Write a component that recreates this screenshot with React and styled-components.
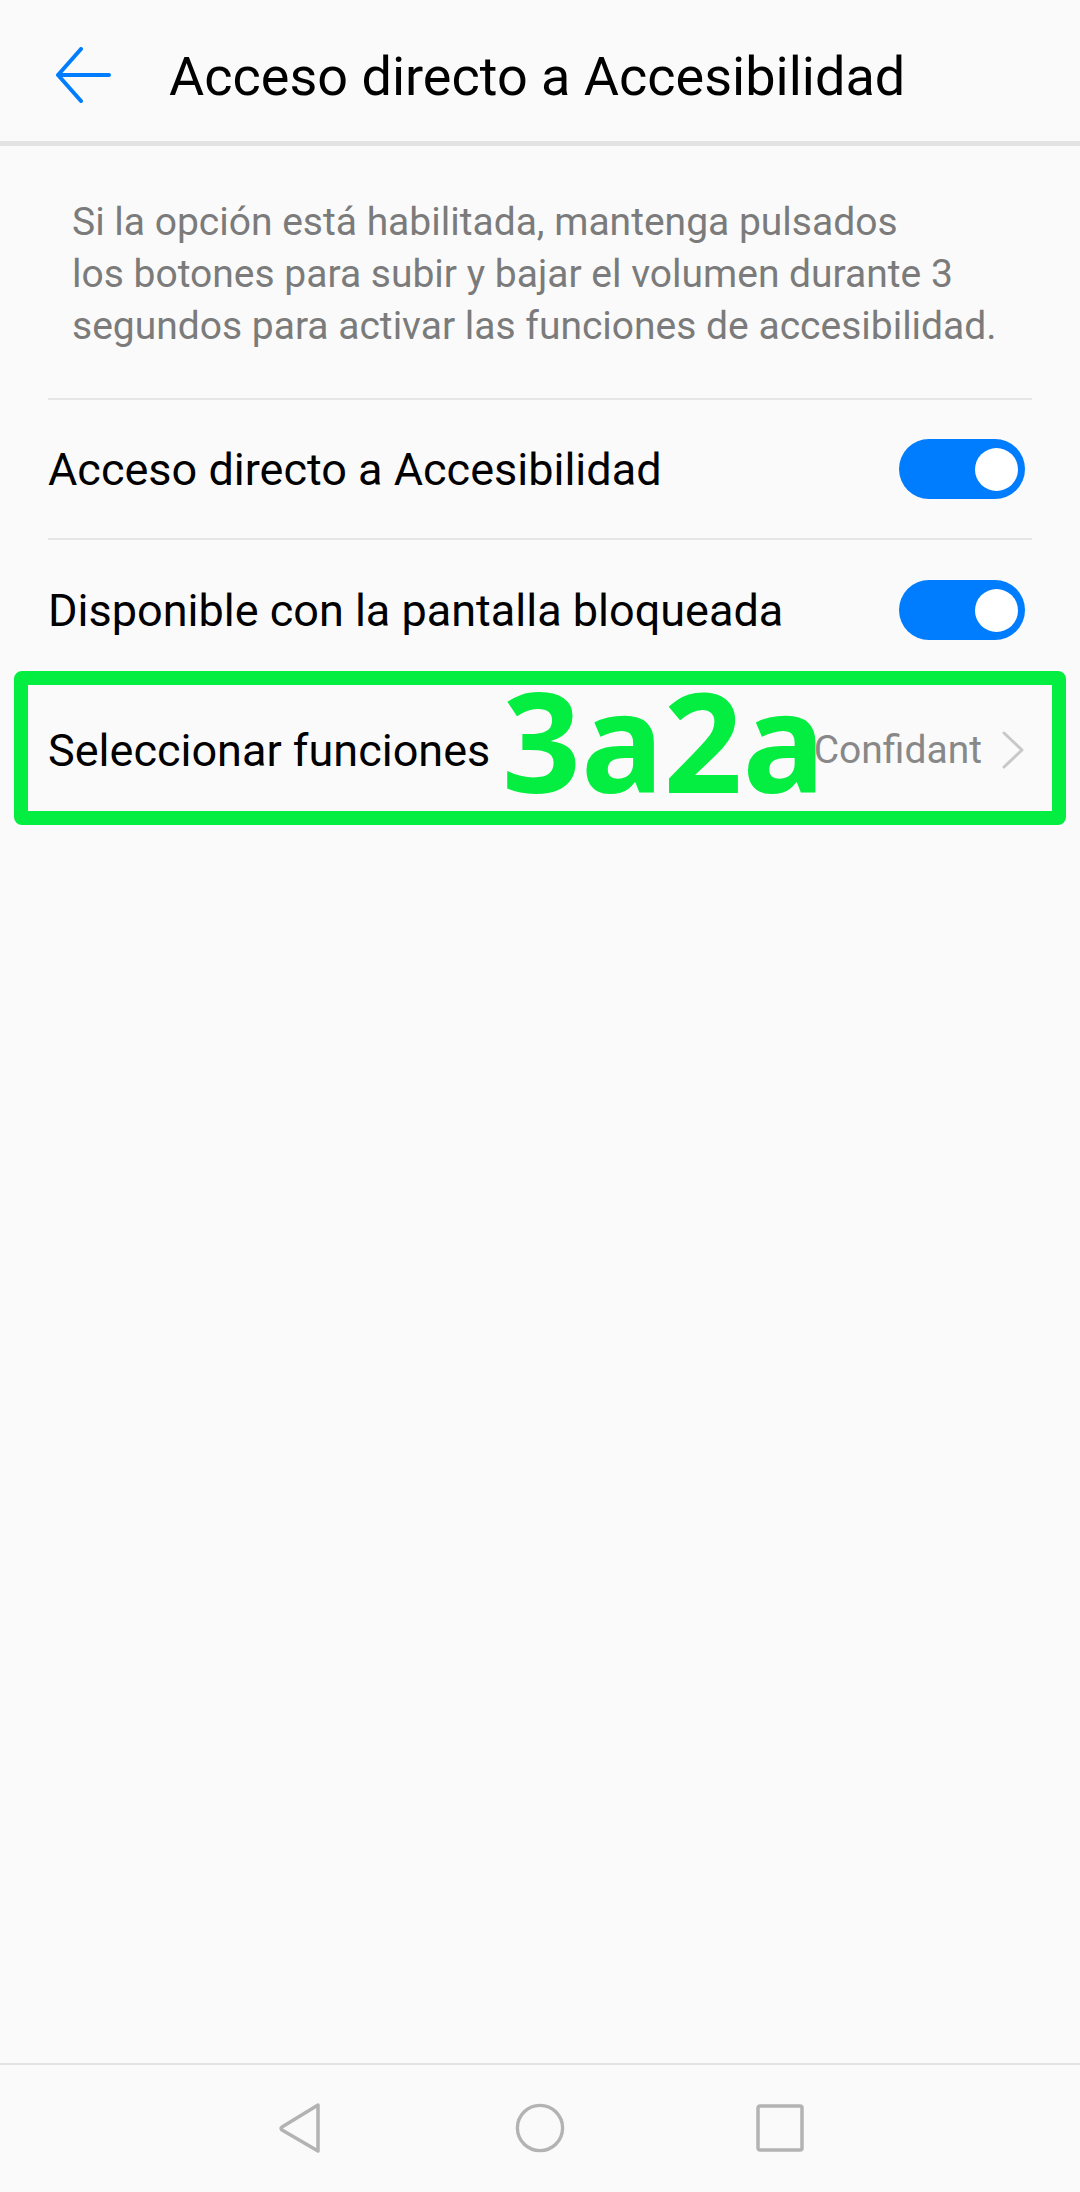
import React from 'react';
import styled, { createGlobalStyle } from 'styled-components';

const GlobalStyle = createGlobalStyle`
  html, body {
    margin: 0;
    padding: 0;
    background: #fafafa;
  }
  * {
    box-sizing: border-box;
  }
`;

const Screen = styled.div`
  min-height: 2192px;
  display: flex;
  flex-direction: column;
  background: #fafafa;
  font-family: Roboto, "Liberation Sans", sans-serif;
`;

const Header = styled.header`
  height: 141px;
  display: flex;
  align-items: center;
  padding-left: 55px;
  border-bottom: 5px solid #e3e3e3;
  box-sizing: content-box;
`;

const BackButton = styled.div`
  width: 56px;
  height: 56px;
  display: flex;
  align-items: center;
  justify-content: center;
  margin-top: 8px;
`;

const Title = styled.h1`
  margin: 12px 0 0 58px;
  font-size: 54px;
  font-weight: 400;
  color: #000;
`;

const Content = styled.main`
  padding: 0 48px;
`;

const Description = styled.p`
  margin: 0;
  padding: 50px 0 46px 24px;
  font-size: 39px;
  line-height: 52px;
  color: #7b7b7b;
  border-bottom: 2px solid #e6e6e6;
`;

const Row = styled.div`
  position: relative;
  height: 140px;
  display: flex;
  align-items: center;
  border-bottom: ${p => (p.last ? 'none' : '2px solid #e6e6e6')};
  padding-right: 7px;
`;

const Label = styled.span`
  flex: 1;
  font-size: 45px;
  color: #000;
`;

const Track = styled.div`
  width: 126px;
  height: 60px;
  border-radius: 30px;
  background: #007dff;
  display: flex;
  align-items: center;
  justify-content: flex-end;
  padding-right: 7px;
`;

const Knob = styled.div`
  width: 43px;
  height: 43px;
  border-radius: 50%;
  background: #fff;
`;

const Value = styled.span`
  font-size: 39px;
  color: #888;
  margin-right: 19px;
`;

const Highlight = styled.div`
  position: absolute;
  top: -9px;
  bottom: -5px;
  left: -34px;
  right: -34px;
  border: 14px solid #03ee40;
  border-radius: 8px;
  pointer-events: none;
`;

const Tag = styled.span`
  position: absolute;
  left: 454px;
  top: -10px;
  font-family: "Noto Sans", "Open Sans", sans-serif;
  font-weight: 700;
  font-size: 138px;
  line-height: 1;
  color: #03ee40;
`;

const NavBar = styled.nav`
  margin-top: auto;
  height: 129px;
  border-top: 2px solid #e3e3e3;
  display: flex;
  align-items: center;
  justify-content: center;
  gap: 190px;
  padding-bottom: 2px;
`;

const NavIcon = styled.div`
  width: 50px;
  height: 50px;
  display: flex;
  align-items: center;
  justify-content: center;
`;

function Toggle() {
  return (
    <Track>
      <Knob />
    </Track>
  );
}

export default function App() {
  return (
    <Screen>
      <GlobalStyle />
      <Header>
        <BackButton>
          <svg width="56" height="56" viewBox="0 0 56 56">
            <path d="M26 2 L3 28 L26 54 M3 28 H54" fill="none" stroke="#007dff" strokeWidth="4" strokeLinecap="round" strokeLinejoin="round" />
          </svg>
        </BackButton>
        <Title>Acceso directo a Accesibilidad</Title>
      </Header>
      <Content>
        <Description>
          Si la opción está habilitada, mantenga pulsados<br />
          los botones para subir y bajar el volumen durante 3<br />
          segundos para activar las funciones de accesibilidad.
        </Description>
        <Row>
          <Label>Acceso directo a Accesibilidad</Label>
          <Toggle />
        </Row>
        <Row last>
          <Label>Disponible con la pantalla bloqueada</Label>
          <Toggle />
        </Row>
        <Row last>
          <Label>Seleccionar funciones</Label>
          <Value>Confidant</Value>
          <svg width="24" height="38" viewBox="0 0 24 38">
            <path d="M3 2 L21 19 L3 36" fill="none" stroke="#c8c8c8" strokeWidth="3" strokeLinecap="round" strokeLinejoin="round" />
          </svg>
          <Tag>3a2a</Tag>
          <Highlight />
        </Row>
      </Content>
      <NavBar>
        <NavIcon>
          <svg width="44" height="52" viewBox="0 0 44 52">
            <path d="M40 3 L4 25 Q2 26 4 28 L40 49 Z" fill="none" stroke="#b3b3b3" strokeWidth="3.5" strokeLinejoin="round" />
          </svg>
        </NavIcon>
        <NavIcon>
          <svg width="52" height="52" viewBox="0 0 52 52">
            <circle cx="26" cy="26" r="23.5" fill="none" stroke="#b3b3b3" strokeWidth="3.5" />
          </svg>
        </NavIcon>
        <NavIcon>
          <svg width="48" height="48" viewBox="0 0 48 48">
            <rect x="2" y="2" width="44" height="44" rx="2" fill="none" stroke="#b3b3b3" strokeWidth="3.5" />
          </svg>
        </NavIcon>
      </NavBar>
    </Screen>
  );
}
